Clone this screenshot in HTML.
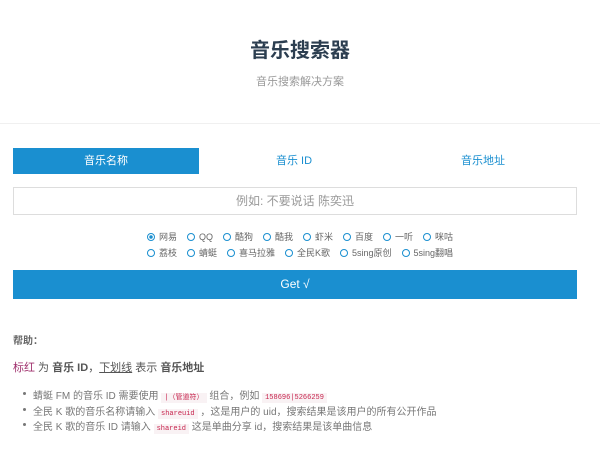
<!DOCTYPE html>
<html><head><meta charset="utf-8"><style>
body{margin:0;width:600px;height:455px;background:#fff;font-family:"Liberation Sans","Noto Sans CJK SC",sans-serif;position:relative;overflow:hidden;color:#555}
.a{position:absolute}
h1{position:absolute;top:34px;left:0;width:600px;text-align:center;font-size:20px;margin:0;color:#2c3e50;font-weight:bold}
.sub{top:73px;left:0;width:600px;text-align:center;font-size:11px;color:#999}
.line{top:123px;left:0;width:600px;height:1px;background:#f0f0f0}
.tab{top:148px;height:26px;line-height:26px;text-align:center;font-size:11px;color:#1a8fd0}
.inp{top:187px;left:13px;width:562px;height:26px;border:1px solid #ddd;text-align:center;line-height:26px;font-size:12px;color:#999}
.radios{left:0;width:600px;text-align:center;font-size:9px;color:#666}
.r{display:inline-block;margin:0 5px}
.r i{display:inline-block;width:6px;height:6px;border:1.5px solid #1a8fd0;border-radius:50%;vertical-align:-1px;margin-right:4px;box-sizing:content-box}
.btn{top:270px;left:13px;width:564px;height:29px;background:#1a8fd0;color:#fff;text-align:center;line-height:29px;font-size:12px}
.t{left:13px;font-size:10px;color:#555}
code{font-family:"Liberation Mono",monospace;font-size:7px;color:#c7254e;background:#f9f2f4;padding:1px 3px}
ul{margin:0;padding:0;list-style:none}
li{position:relative;padding-left:20px;font-size:10px;color:#777;height:15.5px;white-space:nowrap}
li:before{content:"";position:absolute;left:10px;top:5px;width:3px;height:3px;border-radius:50%;background:#777}
</style></head><body>
<h1>音乐搜索器</h1>
<div class="a sub">音乐搜索解决方案</div>
<div class="a line"></div>
<div class="a tab" style="left:13px;width:186px;background:#1a8fd0;color:#fff">音乐名称</div>
<div class="a tab" style="left:200px;width:188px">音乐 ID</div>
<div class="a tab" style="left:389px;width:188px">音乐地址</div>
<div class="a inp">例如: 不要说话 陈奕迅</div>
<div class="a radios" style="top:230px"><span class="r"><i style="background:radial-gradient(#1a8fd0 40%,#fff 45%)"></i>网易</span><span class="r"><i></i>QQ</span><span class="r"><i></i>酷狗</span><span class="r"><i></i>酷我</span><span class="r"><i></i>虾米</span><span class="r"><i></i>百度</span><span class="r"><i></i>一听</span><span class="r"><i></i>咪咕</span></div>
<div class="a radios" style="top:246px"><span class="r"><i></i>荔枝</span><span class="r"><i></i>蜻蜓</span><span class="r"><i></i>喜马拉雅</span><span class="r"><i></i>全民K歌</span><span class="r"><i></i>5sing原创</span><span class="r"><i></i>5sing翻唱</span></div>
<div class="a btn">Get √</div>
<div class="a t" style="top:332px;font-weight:bold;color:#666">帮助：</div>
<div class="a t" style="top:359px;font-size:11px"><span style="color:#a0326e">标红</span> 为 <b>音乐 ID</b>，<u>下划线</u> 表示 <b>音乐地址</b></div>
<ul class="a" style="top:387px;left:13px">
<li>蜻蜓 FM 的音乐 ID 需要使用 <code>|（管道符）</code> 组合，例如 <code>158696|5266259</code></li>
<li>全民 K 歌的音乐名称请输入 <code>shareuid</code> ，这是用户的 uid，搜索结果是该用户的所有公开作品</li>
<li>全民 K 歌的音乐 ID 请输入 <code>shareid</code> 这是单曲分享 id，搜索结果是该单曲信息</li>
</ul>
</body></html>
